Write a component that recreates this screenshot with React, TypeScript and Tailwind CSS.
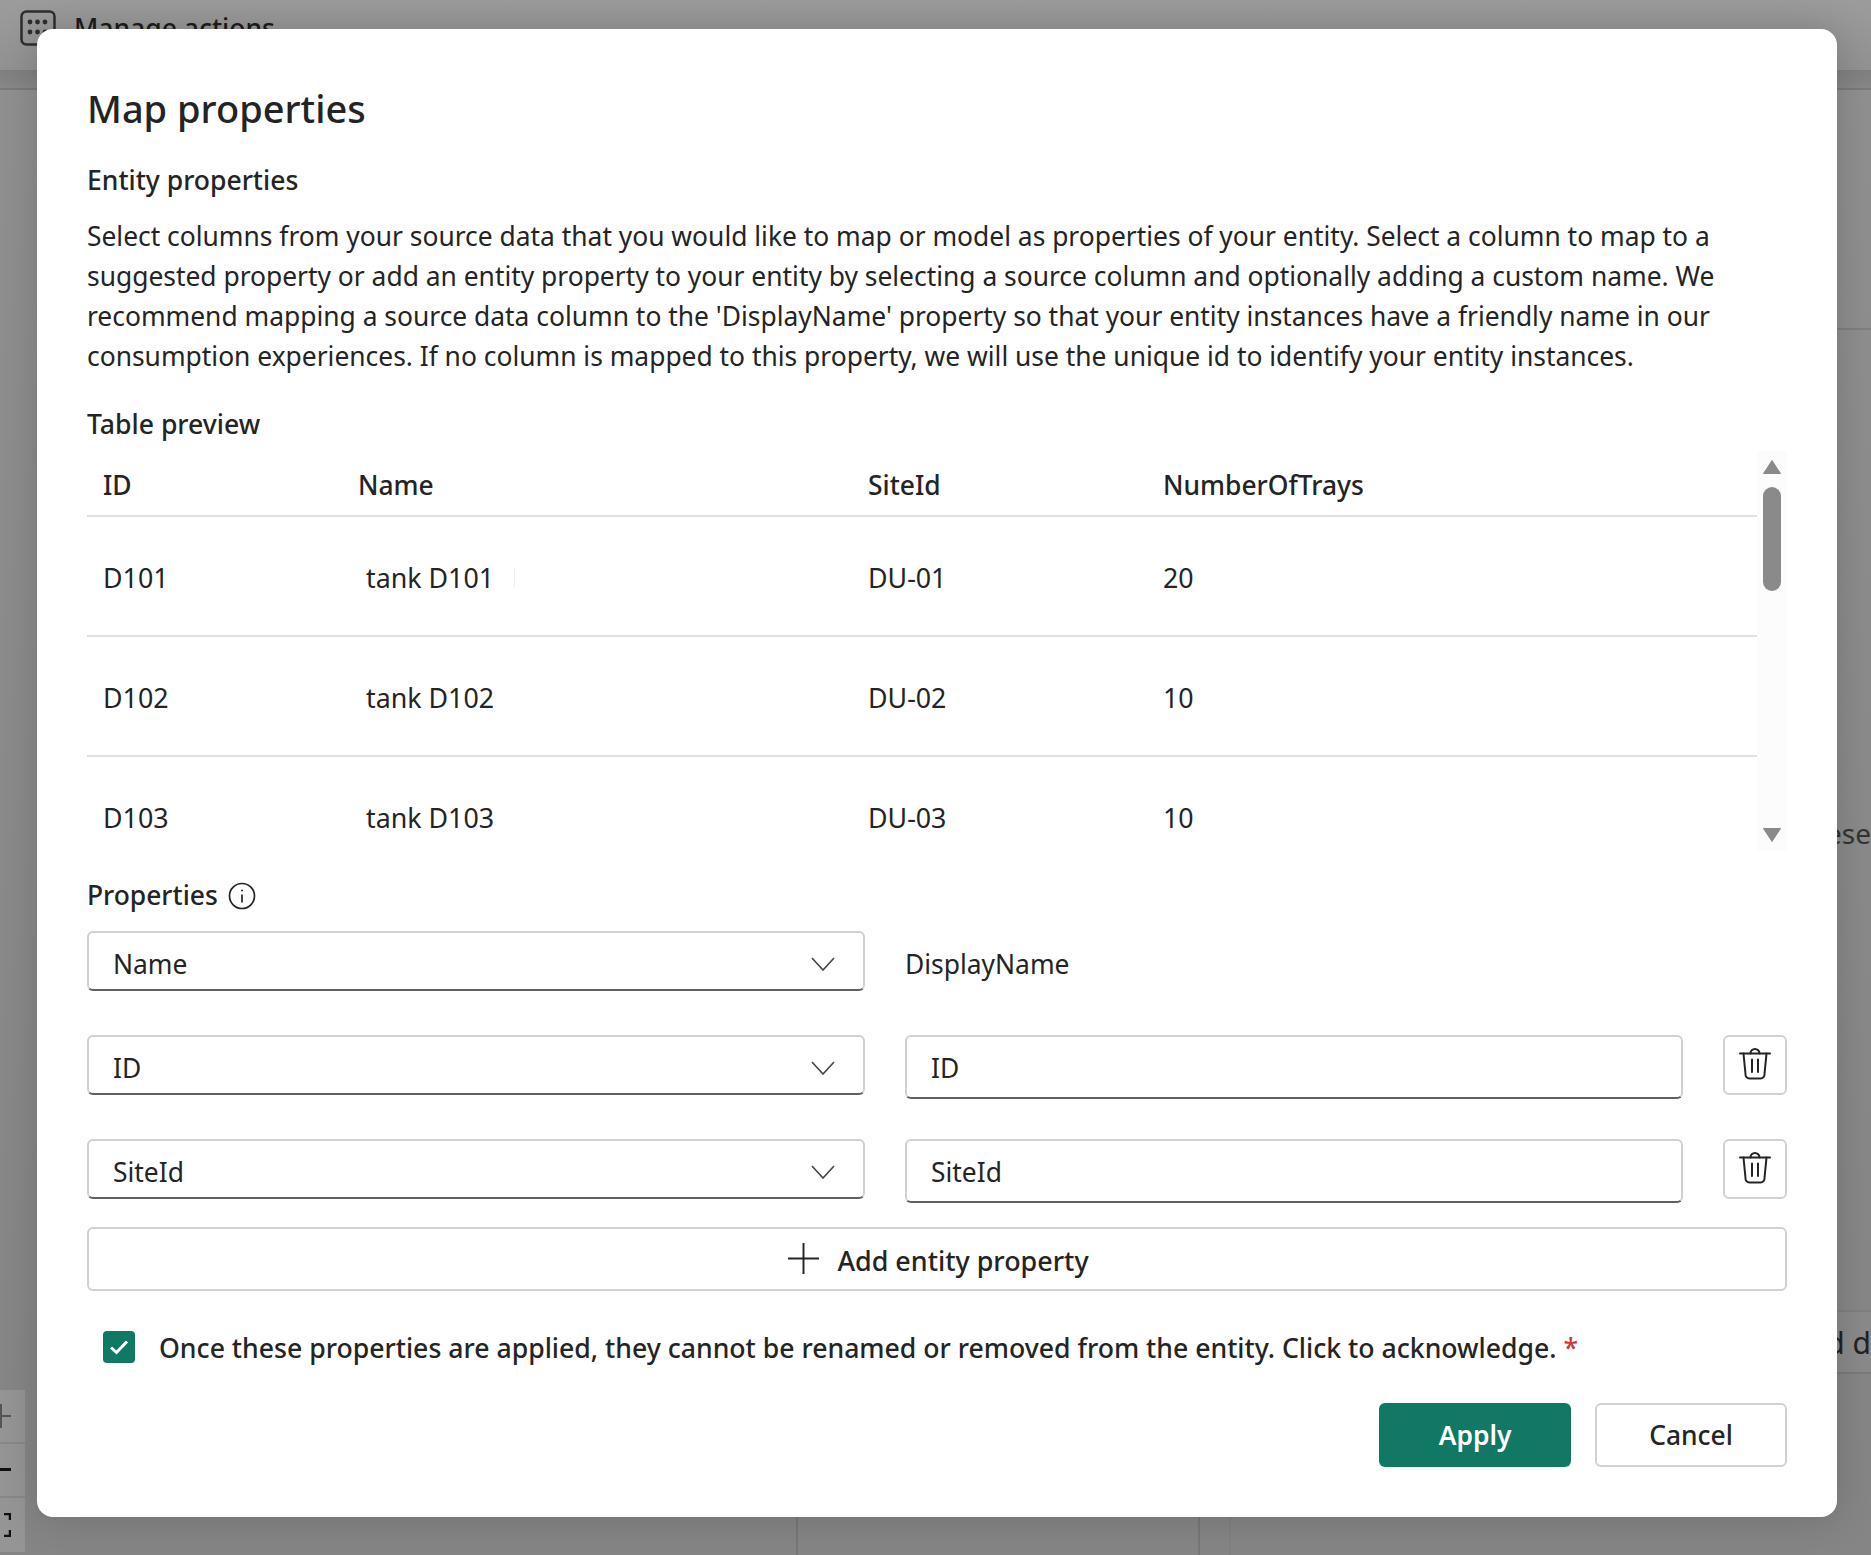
const rows = [
    { id: 'D101', name: 'tank D101', site: 'DU-01', trays: '20' },
    { id: 'D102', name: 'tank D102', site: 'DU-02', trays: '10' },
    { id: 'D103', name: 'tank D103', site: 'DU-03', trays: '10' },
];

function Trash() {
    return (
        <svg width="32" height="33" viewBox="0 0 32 33" fill="none" stroke="#242424" strokeWidth="2" strokeLinecap="round">
            <path d="M1 6.5H31" />
            <path d="M11.5 6.5a4.5 4.5 0 0 1 9 0" />
            <path d="M4.5 6.5L6.5 27a4 4 0 0 0 4 4.5H21.5a4 4 0 0 0 4-4.5L27.5 6.5" />
            <path d="M13 12.5V25M19 12.5V25" />
        </svg>
    );
}

function SelectBox({ value }: { value: string }) {
    return (
        <div className="h-[60px] flex items-center justify-between pl-[24px] pr-[28px] pt-[6px] rounded-[6px] border-2 border-[#d1d1d1] border-b-[#616161] bg-white">
            <span className="pt-[2px]">{value}</span>
            <svg width="24" height="14" viewBox="0 0 24 14" fill="none" stroke="#424242" strokeWidth="1.6">
                <path d="M1 1L12 13L23 1" />
            </svg>
        </div>
    );
}

function PropertyRow({ value }: { value: string }) {
    return (
        <div className="grid grid-cols-[778px_778px_64px] gap-x-10 items-start">
            <SelectBox value={value} />
            <input
                readOnly
                value={value}
                className="h-16 w-full pl-[24px] pt-[2px] rounded-[6px] border-2 border-[#d1d1d1] border-b-[#616161] bg-white outline-none"
            />
            <button className="h-[60px] flex items-center justify-center pb-1 rounded-[6px] border-2 border-[#d1d1d1] bg-white">
                <Trash />
            </button>
        </div>
    );
}

export default function App() {
    return (
        <div className="relative h-[1555px] w-full overflow-hidden bg-[#8e8e8e] font-['Noto_Sans',sans-serif] text-[#242424]">
            {/* Page behind the dialog */}
            <div className="h-[70px] bg-gradient-to-b from-[#9c9c9c] to-[#929292] flex items-start pl-5 pt-[10px] gap-[18px]">
                <svg width="36" height="36" viewBox="0 0 36 36" fill="none">
                    <rect x="1.5" y="1.5" width="33" height="33" rx="5" stroke="#2e2e2e" strokeWidth="2.5" />
                    <g fill="#2e2e2e">
                        <circle cx="10" cy="12" r="2.4" /><circle cx="17.5" cy="12" r="2.4" /><circle cx="25" cy="12" r="2.4" />
                        <circle cx="10" cy="22" r="2.4" /><circle cx="17.5" cy="22" r="2.4" /><circle cx="25" cy="22" r="2.4" />
                    </g>
                </svg>
                <span className="text-[26.5px] leading-[36px] text-[#1c1c1c] font-medium">Manage actions</span>
            </div>
            <div className="h-5 bg-gradient-to-b from-[#808080] to-[#888888] border-b-2 border-[#7a7a7a]" />
            <div className="h-[1465px] flex bg-gradient-to-b from-[#909090] to-[#858585]">
                <div className="w-[25px] pt-[1300px]">
                    <div className="h-[54px] border-b-2 border-[#888888] bg-[#959595] flex items-center">
                        <svg width="11" height="24" viewBox="0 0 11 24" stroke="#555555" strokeWidth="2"><path d="M0 12H11M1 0V24" /></svg>
                    </div>
                    <div className="h-[54px] border-b-2 border-[#888888] bg-[#959595] flex items-center">
                        <svg width="11" height="4" viewBox="0 0 11 4" fill="#111111"><rect width="11" height="3" /></svg>
                    </div>
                    <div className="h-[54px] bg-[#959595] flex items-center">
                        <svg width="11" height="24" viewBox="0 0 11 24" fill="none" stroke="#111111" strokeWidth="2.5"><path d="M4 1H10V7M10 17V23H4" /></svg>
                    </div>
                </div>
                <div className="w-[773px] border-r-2 border-[#777777]" />
                <div className="w-[402px] border-r-2 border-[#777777]" />
                <div className="w-[31px] border-r-2 border-[#808080]" />
                <div className="flex-1 overflow-hidden flex flex-col items-end">
                    <div className="h-[240px] w-full border-b-2 border-[#7f7f7f]" />
                    <div className="h-[483px] w-full shrink-0" />
                    <div className="h-10 text-[28px] leading-10 text-[#333333] whitespace-nowrap shrink-0">these</div>
                    <div className="h-[459px] shrink-0 w-full border-b-2 border-[#7f7f7f]" />
                    <div className="h-[62px] w-full flex justify-end items-center border-b-2 border-[#7a7a7a] bg-[#8a8a8a] text-[30px] text-[#222222] whitespace-nowrap shrink-0">Add d</div>
                </div>
            </div>

            {/* Dialog */}
            <div className="absolute left-[37px] top-[29px] w-[1800px] h-[1488px] bg-white rounded-2xl shadow-[0_0_40px_rgba(0,0,0,0.18)] px-[50px] pt-[55px] text-[26.4px]">
                <h1 className="text-[38px] leading-[48px] font-medium">Map properties</h1>
                <h2 className="mt-7 leading-10 font-medium text-[26.5px]">Entity properties</h2>
                <p className="mt-4 leading-10">
                    Select columns from your source data that you would like to map or model as properties of your entity. Select a column to map to a suggested property or add an entity property to your entity by selecting a source column and optionally adding a custom name. We recommend mapping a source data column to the 'DisplayName' property so that your entity instances have a friendly name in our consumption experiences. If no column is mapped to this property, we will use the unique id to identify your entity instances.
                </p>
                <h2 className="mt-7 leading-10 font-medium text-[26.6px]">Table preview</h2>

                <div className="mt-[7px] h-[400px] flex overflow-hidden">
                    <div className="w-[1670px]">
                        <div className="h-[66px] grid grid-cols-[255px_510px_295px_1fr] pl-[16px] pt-[6px] items-center font-medium border-b-2 border-[#e0e0e0]">
                            <span>ID</span>
                            <span>Name</span>
                            <span>SiteId</span>
                            <span>NumberOfTrays</span>
                        </div>
                        {rows.map((row, i) => (
                            <div key={row.id} className="h-[120px] grid grid-cols-[255px_510px_295px_1fr] pl-[16px] pt-1 items-center border-b-2 border-[#e0e0e0] text-[26.8px]">
                                <span>{row.id}</span>
                                <span className="pl-2 flex items-center">
                                    {row.name}
                                    {i === 0 && <span className="ml-[20px] w-px h-5 bg-[#f0f0f0]" />}
                                </span>
                                <span>{row.site}</span>
                                <span>{row.trays}</span>
                            </div>
                        ))}
                    </div>
                    <div className="w-[30px] bg-[#fcfcfc] flex flex-col items-center pt-[9px]">
                        <svg width="18" height="14" viewBox="0 0 18 14" fill="#8a8a8a"><path d="M9 0.5L17.5 13.5H0.5Z" stroke="#8a8a8a" strokeLinejoin="round" /></svg>
                        <div className="mt-[13px] w-[18px] h-[104px] rounded-full bg-[#8a8a8a]" />
                        <svg className="mt-[237px]" width="18" height="14" viewBox="0 0 18 14" fill="#8a8a8a"><path d="M9 13.5L17.5 0.5H0.5Z" stroke="#8a8a8a" strokeLinejoin="round" /></svg>
                    </div>
                </div>

                <div className="mt-[25px] h-10 flex items-center gap-[10px] font-medium">
                    <span>Properties</span>
                    <svg width="28" height="28" viewBox="0 0 28 28" fill="none" stroke="#242424" strokeWidth="1.7">
                        <circle cx="14" cy="14" r="12.5" />
                        <path d="M14 12.5V20.5" />
                        <circle cx="14" cy="8.5" r="1" fill="#242424" stroke="none" />
                    </svg>
                </div>

                <div className="mt-[15px] grid grid-cols-[778px_1fr] gap-x-10 items-center">
                    <SelectBox value="Name" />
                    <span className="pt-2">DisplayName</span>
                </div>
                <div className="mt-11">
                    <PropertyRow value="ID" />
                </div>
                <div className="mt-10">
                    <PropertyRow value="SiteId" />
                </div>

                <button className="mt-6 h-16 w-full flex items-center justify-center gap-[18px] pl-[3px] rounded-[6px] border-2 border-[#d1d1d1] font-medium text-[26.9px]">
                    <svg className="mb-[2px]" width="31" height="31" viewBox="0 0 32 32" stroke="#242424" strokeWidth="2"><path d="M0 16H32M16 0V32" /></svg>
                    <span className="pt-1">Add entity property</span>
                </button>

                <div className="mt-9 h-10 pl-[16px] flex items-center gap-6">
                    <div className="w-8 h-8 rounded-[4px] bg-[#117865] flex items-center justify-center">
                        <svg width="32" height="32" viewBox="0 0 32 32" fill="none" stroke="white" strokeWidth="3"><path d="M8 16.5L13.5 21.5L24 10.5" /></svg>
                    </div>
                    <span className="pt-[2px] font-medium text-[26.63px] leading-10">
                        Once these properties are applied, they cannot be renamed or removed from the entity. Click to acknowledge. <span className="text-[#d13438]">*</span>
                    </span>
                </div>

                <div className="mt-9 flex justify-end gap-6">
                    <button className="w-[192px] h-16 pt-[2px] rounded-[6px] bg-[#117865] text-white font-semibold">Apply</button>
                    <button className="w-[192px] h-16 pt-[2px] rounded-[6px] border-2 border-[#d1d1d1] font-medium">Cancel</button>
                </div>
            </div>
        </div>
    );
}
